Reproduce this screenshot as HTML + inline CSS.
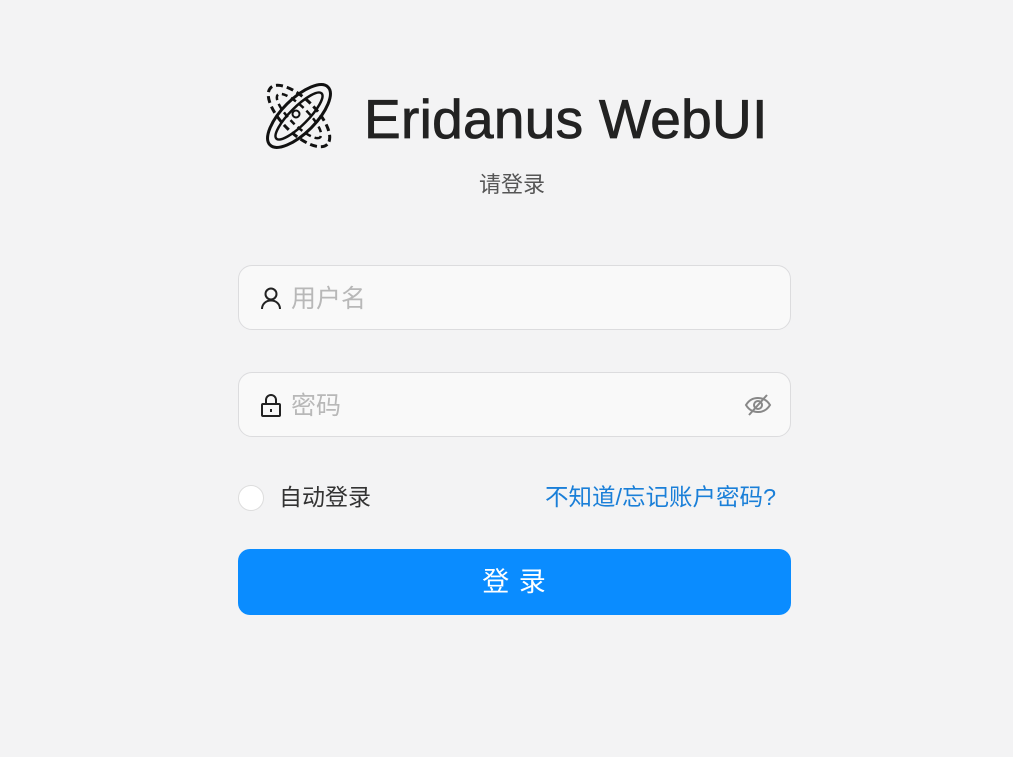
<!DOCTYPE html>
<html><head><meta charset="utf-8"><style>
body{margin:0;width:1013px;height:757px;background:#f3f3f4;font-family:"Liberation Sans","Noto Sans CJK SC",sans-serif;position:relative;overflow:hidden}
.abs{position:absolute}
.inp{position:absolute;left:238px;width:551px;height:63px;border:1px solid #dcdcde;border-radius:14px;background:#f9f9f9}
.ph{position:absolute;left:52px;top:2px;line-height:63px;font-size:25px;color:#b8b8b8}
</style></head><body>
<svg class="abs" style="left:256px;top:73px" width="86" height="86" viewBox="0 0 86 86" fill="none" stroke="#111" stroke-width="3">
<g transform="rotate(-45 43 43)">
<ellipse cx="43" cy="43" rx="41" ry="17"/>
<ellipse cx="43" cy="43" rx="32" ry="9" stroke-width="2.5"/>
</g>
<g transform="rotate(45 43 43)">
<ellipse cx="43" cy="43" rx="40" ry="17" stroke-dasharray="7 4"/>
<ellipse cx="43" cy="43" rx="30" ry="9" stroke-dasharray="6 4" stroke-width="2.5"/>
</g>
<circle cx="40" cy="41" r="3.5" stroke-width="2"/>
</svg>
<div class="abs" style="left:364px;top:84px;font-size:55px;color:#222;line-height:70px;letter-spacing:0.3px;-webkit-text-stroke:0.8px #222">Eridanus WebUI</div>
<div class="abs" style="left:479px;top:170px;font-size:22px;color:#555;line-height:30px">请登录</div>
<div class="inp" style="top:265px">
<svg class="abs" style="left:20px;top:20px" width="24" height="24" viewBox="0 0 24 24" fill="none" stroke="#222" stroke-width="2"><circle cx="12" cy="8" r="5.5"/><path d="M3 23c0-5 4-8.5 9-8.5s9 3.5 9 8.5"/></svg>
<div class="ph">用户名</div></div>
<div class="inp" style="top:372px">
<svg class="abs" style="left:20px;top:20px" width="24" height="24" viewBox="0 0 24 24" fill="none" stroke="#222" stroke-width="2"><rect x="3" y="11" width="18" height="12" rx="1"/><path d="M7 11V7a5 5 0 0 1 10 0v4"/><path d="M12 16v3"/></svg>
<div class="ph">密码</div>
<svg class="abs" style="left:505px;top:20px" width="28" height="24" viewBox="0 0 28 24" fill="none" stroke="#888" stroke-width="2"><path d="M2 12c3-5 7-7 12-7s9 2 12 7c-3 5-7 7-12 7S5 17 2 12z"/><circle cx="14" cy="12" r="4"/><path d="M5 22L23 2"/></svg>
</div>
<div class="abs" style="left:238px;top:485px;width:24px;height:24px;border:1px solid #ddd;border-radius:50%;background:#fff"></div>
<div class="abs" style="left:279px;top:481px;font-size:23px;color:#333;line-height:32px">自动登录</div>
<div class="abs" style="left:545px;top:481px;font-size:23.5px;color:#1a7fd8;line-height:32px;white-space:nowrap">不知道/忘记账户密码?</div>
<div class="abs" style="left:238px;top:549px;width:553px;height:66px;border-radius:12px;background:#0a8cff;color:#fff;font-size:27px;line-height:66px;text-align:center;letter-spacing:1px">登 录</div>
</body></html>
